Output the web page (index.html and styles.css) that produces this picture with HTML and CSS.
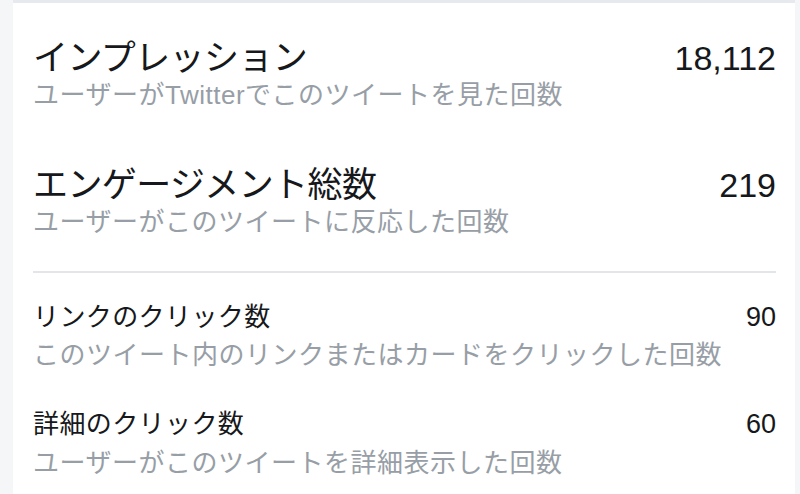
FILE: index.html
```html
<!DOCTYPE html>
<html lang="ja">
<head>
<meta charset="utf-8">
<link rel="stylesheet" href="styles.css">
</head>
<body>
<div class="card">
  <section class="metric metric-lg first">
    <div class="head">
      <span class="title">インプレッション</span>
      <span class="value">18,112</span>
    </div>
    <div class="desc">ユーザーがTwitterでこのツイートを見た回数</div>
  </section>
  <section class="metric metric-lg second">
    <div class="head">
      <span class="title">エンゲージメント総数</span>
      <span class="value">219</span>
    </div>
    <div class="desc">ユーザーがこのツイートに反応した回数</div>
  </section>
  <hr class="divider">
  <section class="metric metric-sm third">
    <div class="head">
      <span class="title">リンクのクリック数</span>
      <span class="value">90</span>
    </div>
    <div class="desc">このツイート内のリンクまたはカードをクリックした回数</div>
  </section>
  <section class="metric metric-sm fourth">
    <div class="head">
      <span class="title">詳細のクリック数</span>
      <span class="value">60</span>
    </div>
    <div class="desc">ユーザーがこのツイートを詳細表示した回数</div>
  </section>
</div>
</body>
</html>
```

FILE: styles.css
```css
html, body {
  margin: 0;
  padding: 0;
}
body {
  width: 800px;
  height: 494px;
  overflow: hidden;
  background: #f4f6f8;
  font-family: "Liberation Sans", "Noto Sans CJK JP", sans-serif;
}
.card {
  margin: 0 5px 0 13px;
  border-top: 3px solid #e6e9ed;
  background: #ffffff;
  height: 491px;
  padding: 0 19px 0 20px;
  display: flex;
  flex-direction: column;
}
.metric {
  display: flex;
  flex-direction: column;
}
.head {
  display: flex;
  justify-content: space-between;
  align-items: baseline;
}
.title {
  font-family: "Noto Sans CJK JP", sans-serif;
  color: #16181b;
  font-weight: 400;
}
.value {
  font-family: "Liberation Sans", "Helvetica", sans-serif;
  color: #16181b;
}
.desc {
  font-family: "Liberation Sans", "Noto Sans CJK JP", sans-serif;
  font-size: 26px;
  line-height: 34px;
  letter-spacing: 0.5px;
  color: #979ea6;
  white-space: nowrap;
}
.metric-lg .title {
  font-size: 35px;
  line-height: 42px;
  letter-spacing: -0.6px;
}
.metric-lg .value {
  font-size: 34px;
}
.metric-lg .desc {
  margin-top: 0;
}
.metric-sm .title {
  font-size: 26px;
  line-height: 34px;
  letter-spacing: 0.4px;
}
.metric-sm .value {
  font-size: 27px;
}
.first {
  margin-top: 31px;
}
.second {
  margin-top: 49px;
}
.divider {
  margin: 32px 0 0 0;
  border: 0;
  height: 2px;
  background: #e2e5e9;
}
.third {
  margin-top: 25px;
}
.third .desc {
  margin-top: 5px;
}
.fourth {
  margin-top: 33px;
}
.fourth .desc {
  margin-top: 6px;
}
```
